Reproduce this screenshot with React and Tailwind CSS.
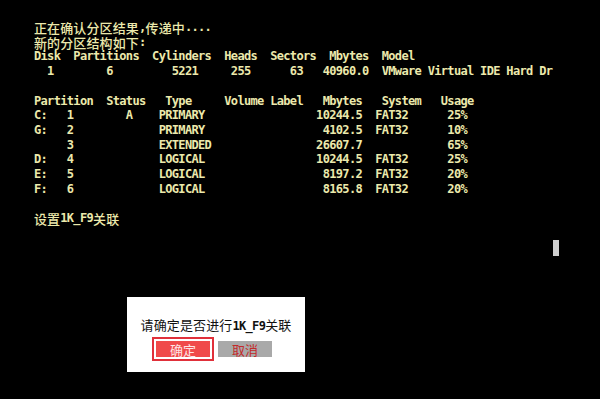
import React from "react";

const pad = (...parts) => {
  let s = "";
  for (const [col, t] of parts) s = s.padEnd(col, " ") + t;
  return s;
};

const C = ({ children }) => (
  <span className="inline-block align-top h-[14.72px] leading-[16px] font-['Noto_Sans_CJK_SC',sans-serif] text-[13px] tracking-[0.12px] font-medium">
    {children}
  </span>
);

const Line = ({ children }) => (
  <div className="h-[14.72px] leading-[14.72px] whitespace-pre">{children}</div>
);

const rows = [
  ["C:", "1", "A", "PRIMARY", "10244.5", "FAT32", "25%"],
  ["G:", "2", "", "PRIMARY", "4102.5", "FAT32", "10%"],
  ["", "3", "", "EXTENDED", "26607.7", "", "65%"],
  ["D:", "4", "", "LOGICAL", "10244.5", "FAT32", "25%"],
  ["E:", "5", "", "LOGICAL", "8197.2", "FAT32", "20%"],
  ["F:", "6", "", "LOGICAL", "8165.8", "FAT32", "20%"],
];

export default function App() {
  return (
    <div className="relative w-[600px] h-[399px] overflow-hidden bg-black pl-[34px] pt-[20px] font-['DejaVu_Sans_Mono',monospace] text-[12px] font-bold tracking-[-0.664px] text-[#ece9ac]">
      <Line>
        <C>正在确认分区结果</C>,<C>传递中</C>....
      </Line>
      <Line>
        <C>新的分区结构如下</C>:
      </Line>
      <Line>
        {pad([0, "Disk"], [6, "Partitions"], [18, "Cylinders"], [29, "Heads"], [36, "Sectors"], [45, "Mbytes"], [53, "Model"])}
      </Line>
      <Line>
        {pad([2, "1"], [11, "6"], [21, "5221"], [30, "255"], [39, "63"], [44, "40960.0"], [53, "VMware Virtual IDE Hard Dr"])}
      </Line>
      <Line> </Line>
      <Line>
        {pad([0, "Partition"], [11, "Status"], [20, "Type"], [29, "Volume Label"], [44, "Mbytes"], [53, "System"], [62, "Usage"])}
      </Line>
      {rows.map((r, i) => (
        <Line key={i}>
          {pad([0, r[0]], [5, r[1]], [14, r[2]], [19, r[3]], [50 - r[4].length, r[4]], [52, r[5]], [63, r[6]])}
        </Line>
      ))}
      <Line> </Line>
      <Line>
        <C>设置</C>1K_F9<C>关联</C>
      </Line>

      {/* blinking cursor */}
      <div className="absolute left-[553px] top-[240px] w-[6px] h-[16px] bg-[#cfcfcf]" />

      {/* dialog */}
      <div className="absolute left-[127px] top-[297px] w-[178px] h-[75px] bg-white flex flex-col tracking-normal">
        <div className="mt-[20px] h-[16px] leading-[16px] text-center text-[#111] font-normal whitespace-pre">
          <span className="font-['Noto_Sans_CJK_SC',sans-serif] text-[13px] tracking-[0.12px]">请确定是否进行</span>
          <span className="font-['DejaVu_Sans_Mono',monospace] text-[12px] font-bold tracking-[-0.664px]">1K_F9</span>
          <span className="font-['Noto_Sans_CJK_SC',sans-serif] text-[13px] tracking-[0.12px]">关联</span>
        </div>
        <div className="mt-[4px] ml-[25px] flex items-center gap-[4px]">
          <div className="w-[62px] h-[24px] border-2 border-[#e0303a] p-[2px] bg-white">
            <div className="w-full h-full bg-[#f04a4a] flex items-center justify-center font-['Noto_Sans_CJK_SC',sans-serif] text-[13px] font-normal text-[#ffe4e4] leading-none">
              确定
            </div>
          </div>
          <div className="w-[54px] h-[16px] bg-[#a9a9a9] flex items-center justify-center font-['Noto_Sans_CJK_SC',sans-serif] text-[13px] font-normal text-[#c42a2a] leading-none">
            取消
          </div>
        </div>
      </div>
    </div>
  );
}
